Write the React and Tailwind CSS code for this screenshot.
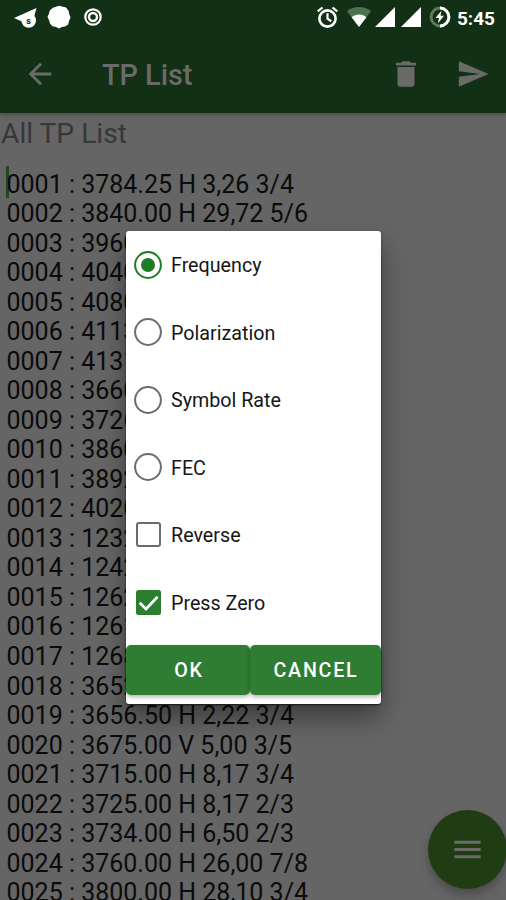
import React from 'react';

const transponders = [
    '0001 : 3784.25 H 3,26 3/4',
    '0002 : 3840.00 H 29,72 5/6',
    '0003 : 3960.00 H 30,00 3/4',
    '0004 : 4040.00 H 30,00 3/4',
    '0005 : 4080.00 H 30,00 3/4',
    '0006 : 4113.00 H 12,50 3/4',
    '0007 : 4131.00 H 12,50 3/4',
    '0008 : 3660.00 V 27,50 3/4',
    '0009 : 3726.00 V 27,50 3/4',
    '0010 : 3860.00 V 27,50 3/4',
    '0011 : 3892.00 V 8,17 3/4',
    '0012 : 4020.00 V 27,50 3/4',
    '0013 : 12322.00 H 27,50 3/4',
    '0014 : 12422.00 H 27,50 3/4',
    '0015 : 12622.00 H 27,50 3/4',
    '0016 : 12611.00 V 27,50 3/4',
    '0017 : 12688.00 V 27,50 3/4',
    '0018 : 3652.00 H 2,22 3/4',
    '0019 : 3656.50 H 2,22 3/4',
    '0020 : 3675.00 V 5,00 3/5',
    '0021 : 3715.00 H 8,17 3/4',
    '0022 : 3725.00 H 8,17 2/3',
    '0023 : 3734.00 H 6,50 2/3',
    '0024 : 3760.00 H 26,00 7/8',
    '0025 : 3800.00 H 28,10 3/4',
];

const sortOptions = ['Frequency', 'Polarization', 'Symbol Rate', 'FEC'];

const Icon = ({ d, className }) => (
    <svg viewBox="0 0 24 24" fill="currentColor" className={className}>
        <path d={d} />
    </svg>
);

const StatusBar = () => (
    <div className="flex h-[34px] items-center justify-between pl-[14px] pr-[11px] text-white">
        <div className="flex items-center">
            <svg viewBox="0 0 24 24" className="h-6 w-6">
                <path d="M0 13 22.500 3 20 12 9 17Z" fill="#fff" />
                <circle cx="14.700" cy="15.500" r="7.300" fill="#fff" />
                <text x="14.600" y="18.500" textAnchor="middle" fontSize="9" fontWeight="700" fill="#123015" fontFamily="Roboto, sans-serif">s</text>
            </svg>
            <svg viewBox="0 0 24 24" className="ml-[9px] h-6 w-6">
                <path d="M12 .7 15 1.6 19 2.6 21.7 6 22 8.5 23.5 12.5 22 16 21.2 19.5 18 21.5 15 22 12 23.5 9 22 5.5 21.3 3 18.5 2.2 15.5.5 12 2 8.5 2.7 5.5 6 2.8 9 1.7Z" fill="#fff" />
            </svg>
            <svg viewBox="0 0 20 20" className="ml-3 h-5 w-5" fill="none" stroke="#fff">
                <circle cx="10" cy="10" r="7.7" strokeWidth="2.2" />
                <circle cx="10" cy="10" r="4" strokeWidth="2.4" />
            </svg>
        </div>
        <div className="flex items-center">
            <svg viewBox="0 0 24 24" className="h-[25px] w-[25px]" fill="none" stroke="#fff" strokeWidth="2.5">
                <circle cx="12" cy="13" r="7.800" />
                <path d="M12 8V13.200L15.600 15.600M2.600 6.200 7.200 2.400M21.400 6.200 16.800 2.400" strokeWidth="2.100" />
            </svg>
            <svg viewBox="0 0 24 20" className="ml-[7px] h-5 w-6">
                <path d="M12 20 0 4.2C3.5 1.4 7.6 0 12 0s8.5 1.4 12 4.2Z" fill="#4d7250" />
                <path d="M12 20 4.6 10.2C6.7 8.500 9.200 7.600 12 7.600s5.300.9 7.400 2.600Z" fill="#fff" />
            </svg>
            <svg viewBox="0 0 20 20" className="ml-[4px] h-5 w-5">
                <path d="M0 20 20 0V20Z" fill="#fff" />
            </svg>
            <svg viewBox="0 0 20 20" className="ml-[6px] h-5 w-5">
                <path d="M0 20 20 0V20Z" fill="#fff" />
            </svg>
            <svg viewBox="0 0 22 22" className="ml-[8px] h-[22px] w-[22px]">
                <circle cx="11" cy="11" r="8.9" fill="none" stroke="#5b7d5d" strokeWidth="3" />
                <path d="M11 2.100A8.900 8.900 0 0 1 11 19.900" fill="none" stroke="#fff" strokeWidth="3" />
                <path d="M12.500 4.500 6.500 12H10L8.800 17.500 15 9.800H11.500Z" fill="#fff" />
            </svg>
            <span className="relative top-px ml-[6px] text-[19px] leading-none font-bold">5:45</span>
        </div>
    </div>
);

const Toolbar = () => (
    <div className="flex h-[79px] items-center pl-[23px] pr-[16px] text-[#6a6b69]">
        <Icon className="h-[34px] w-[34px]" d="M20 11H7.83l5.59-5.59L12 4l-8 8 8 8 1.41-1.41L7.83 13H20v-2z" />
        <h1 className="ml-[45px] pt-[3px] text-[28.800px] leading-none font-medium">TP List</h1>
        <Icon className="ml-auto h-[34px] w-[34px]" d="M6 19c0 1.1.9 2 2 2h8c1.1 0 2-.9 2-2V7H6v12zM19 4h-3.5l-1-1h-5l-1 1H5v2h14V4z" />
        <Icon className="ml-[33px] h-[34px] w-[34px]" d="M2.01 21L23 12 2.01 3 2 10l15 2-15 2z" />
    </div>
);

const SortDialog = () => (
    <div className="absolute top-[231px] left-[126px] flex h-[473px] w-[255px] flex-col rounded-[3px] bg-white text-[#161616] shadow-[0_1px_2px_rgba(0,0,0,0.7),0_14px_26px_rgba(0,0,0,0.4)]">
        {sortOptions.map((label, i) => (
            <label key={label} className="flex h-[67.5px] items-center pl-[8px]">
                <svg viewBox="0 0 28 28" className="h-7 w-7" fill="none">
                    <circle cx="14" cy="14" r="12.9" strokeWidth="2" stroke={i === 0 ? '#1e7d24' : '#6b6b6b'} />
                    {i === 0 && <circle cx="14" cy="14" r="7" fill="#1e7d24" />}
                </svg>
                <span className="ml-[9px] pt-[3px] text-[19.7px]">{label}</span>
            </label>
        ))}
        <label className="flex h-[67.5px] items-center pl-[10px]">
            <span className="h-[25px] w-[25px] rounded-[3px] border-2 border-[#6b6b6b]"></span>
            <span className="ml-[10px] pt-[3px] text-[19.7px]">Reverse</span>
        </label>
        <label className="flex h-[67.5px] items-center pl-[10px]">
            <svg viewBox="0 0 25 25" className="h-[25px] w-[25px]" fill="none">
                <rect width="25" height="25" rx="2.5" fill="#2a7f2f" />
                <path d="M3.700 12.700 10 19 21.600 6.800" stroke="#fff" strokeWidth="2.700" />
            </svg>
            <span className="ml-[10px] pt-[3px] text-[19.7px]">Press Zero</span>
        </label>
        <div className="mt-[9px] flex h-[50px] text-[19.7px] font-medium tracking-[1.76px] text-white">
            <button className="w-[124px] rounded-[5px] bg-[#2e7d32] pt-[2px] pl-[2px] shadow-[0_2px_4px_rgba(0,0,0,0.3)]">OK</button>
            <button className="w-[131px] rounded-[5px] bg-[#2e7d32] pt-[2px] pl-px shadow-[0_2px_4px_rgba(0,0,0,0.3)]">CANCEL</button>
        </div>
    </div>
);

const App = () => {
    return (
        <div className="relative h-[900px] w-[506px] overflow-hidden bg-[#656565] font-[Roboto,sans-serif]">
            <header className="relative h-[113px] bg-[#123015] shadow-[0_2px_4px_rgba(0,0,0,0.25)]">
                <StatusBar />
                <Toolbar />
            </header>

            <main>
                <h2 className="mt-[4px] pl-[1px] text-[28.200px] leading-[33px] text-[#373737]">All TP List</h2>
                <div className="relative mt-[19.500px] pl-[6.500px] text-[25px] leading-[29.53px] whitespace-pre text-[#0b0b0b]">
                    {/* Text caret */}
                    <span className="absolute top-[-4px] left-[6px] h-[32px] w-[3px] bg-[#254428]"></span>
                    {transponders.map((line) => (
                        <div key={line} className="relative">{line}</div>
                    ))}
                </div>
            </main>

            <button className="absolute top-[810px] left-[428px] flex h-[79px] w-[79px] items-center justify-center rounded-full bg-[#203c12] text-[#6a6b69] shadow-[0_6px_10px_rgba(0,0,0,0.25)]">
                <Icon className="h-[35px] w-[35px]" d="M3 18h18v-2H3v2zm0-5h18v-2H3v2zm0-7v2h18V6H3z" />
            </button>

            <SortDialog />
        </div>
    );
};

export default App;
